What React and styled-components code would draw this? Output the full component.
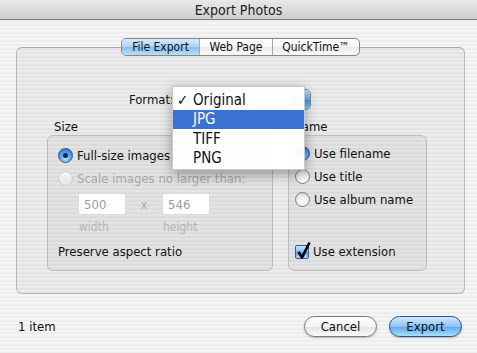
import styled, { createGlobalStyle } from 'styled-components'

const Global = createGlobalStyle`
  html, body { margin: 0; padding: 0; }
  body {
    width: 477px;
    height: 353px;
    overflow: hidden;
    font-family: "DejaVu Sans Condensed", "DejaVu Sans", sans-serif;
    font-size: 13px;
    color: #111;
  }
`

const Window = styled.div`
  width: 477px;
  height: 353px;
  display: flex;
  flex-direction: column;
  background: repeating-linear-gradient(to bottom, #ededed 0, #ededed 2px, #f5f5f5 2px, #f5f5f5 4px);
`

const TitleBar = styled.div`
  height: 19px;
  border-bottom: 1px solid #7e7e7e;
  background: linear-gradient(#e9e9e9, #cfcfcf);
  display: flex;
  align-items: center;
  justify-content: center;
  font-size: 14px;
  color: #222;
`

const Body = styled.div`
  flex: 1;
  display: flex;
  flex-direction: column;
  padding: 18px 12px 0 16px;
`

const Tabs = styled.div`
  display: flex;
  justify-content: center;
  height: 18px;
  margin-bottom: -9px;
  position: relative;
  z-index: 1;
`

const Segments = styled.div`
  display: flex;
  border: 1px solid #868686;
  border-radius: 5px;
  overflow: hidden;
  background: linear-gradient(#ffffff 0%, #f6f6f6 50%, #ebebeb 51%, #fafafa 100%);
`

const Tab = styled.div`
  width: ${p => p.$w}px;
  display: flex;
  align-items: center;
  justify-content: center;
  font-size: 12px;
  color: #111;
  border-left: ${p => (p.$first ? 'none' : '1px solid #a8a8a8')};
  background: ${p =>
    p.$active
      ? 'linear-gradient(#d6eafd 0%, #acd2f8 50%, #83bdf5 51%, #b7e1fe 100%)'
      : 'transparent'};
  box-sizing: border-box;
`

const Panel = styled.div`
  height: 247px;
  box-sizing: border-box;
  border: 1px solid #b7b7b7;
  border-top-color: #a9a9a9;
  border-radius: 6px;
  background: rgba(0, 0, 0, 0.035);
  display: flex;
  flex-direction: column;
`

const FormatRow = styled.div`
  margin-top: 41px;
  height: 21px;
  display: flex;
  align-items: center;
`

const FormatLabel = styled.div`
  width: 163px;
  text-align: right;
  padding-right: 6px;
  box-sizing: border-box;
`

const PopupWrap = styled.div`
  position: relative;
  width: 131px;
  height: 21px;
`

const Popup = styled.div`
  height: 21px;
  border: 1px solid #8a8a8a;
  border-radius: 5px;
  box-sizing: border-box;
  background: linear-gradient(#ffffff, #ececec);
  display: flex;
  justify-content: flex-end;
  overflow: hidden;
`

const PopupArrow = styled.div`
  width: 18px;
  background: linear-gradient(#bfe0fd 0%, #6aaef2 50%, #3f8fe8 51%, #8fd0fd 100%);
  border-left: 1px solid #4a6fa8;
`

const Menu = styled.div`
  position: absolute;
  left: -8px;
  top: -3px;
  width: 133px;
  padding: 3px 0 1px;
  background: rgba(255, 255, 255, 0.97);
  border: 1px solid #c9c9c9;
  box-shadow: 0 4px 12px rgba(0, 0, 0, 0.35);
  font-size: 15px;
  z-index: 5;
  box-sizing: border-box;
`

const MenuItem = styled.div`
  height: 19.5px;
  display: flex;
  align-items: center;
  padding-left: 20px;
  position: relative;
  background: ${p => (p.$hi ? '#3a72d4' : 'transparent')};
  color: ${p => (p.$hi ? '#fff' : '#111')};
`

const Check = styled.span`
  position: absolute;
  left: 4px;
  font-size: 15px;
  font-weight: bold;
`

const Columns = styled.div`
  display: flex;
  gap: 15px;
  padding-left: 30px;
  margin-top: 9px;
`

const Column = styled.div`
  width: ${p => p.$w}px;
  display: flex;
  flex-direction: column;
`

const GroupLabel = styled.div`
  height: 16px;
  line-height: 16px;
  padding-left: ${p => p.$pad}px;
`

const Group = styled.div`
  height: 136px;
  box-sizing: border-box;
  border: 1px solid #bcbcbc;
  border-radius: 6px;
  background: rgba(0, 0, 0, 0.035);
  display: flex;
  flex-direction: column;
  padding: ${p => p.$pad};
`

const Option = styled.div`
  display: flex;
  align-items: center;
  gap: 4px;
  height: ${p => p.$h || 23}px;
  color: ${p => (p.$disabled ? '#a8a8a8' : '#111')};
`

const Radio = styled.span`
  width: 15px;
  height: 15px;
  border-radius: 50%;
  box-sizing: border-box;
  flex: none;
  position: relative;
  border: 1px solid ${p => (p.$on ? '#2f5590' : p.$disabled ? '#c8c8c8' : '#7e7e7e')};
  background: ${p =>
    p.$on
      ? 'radial-gradient(circle at 50% 75%, #b9e4ff 0%, #5aa7f0 45%, #1f63c2 100%)'
      : p.$disabled
      ? 'linear-gradient(#f4f4f4, #e6e6e6)'
      : 'radial-gradient(circle at 50% 80%, #ffffff 0%, #f2f2f2 50%, #c9c9c9 100%)'};
  &::after {
    content: '';
    display: ${p => (p.$on ? 'block' : 'none')};
    position: absolute;
    left: 4px;
    top: 4px;
    width: 5px;
    height: 5px;
    border-radius: 50%;
    background: #0d2750;
  }
`

const SizeInputs = styled.div`
  display: flex;
  align-items: center;
  padding-left: 20px;
  margin-top: 3px;
  height: 22px;
`

const Field = styled.div`
  width: 48px;
  height: 22px;
  box-sizing: border-box;
  background: #fff;
  border: 1px solid #dcdcdc;
  color: #9c9c9c;
  display: flex;
  align-items: center;
  padding-left: 5px;
`

const Times = styled.div`
  width: 36px;
  text-align: center;
  color: #b0b0b0;
`

const Captions = styled.div`
  display: flex;
  padding-left: 21px;
  height: 24px;
  align-items: center;
  font-size: 12px;
  color: #b4b4b4;
`

const Caption = styled.div`
  width: ${p => p.$w}px;
`

const Plain = styled.div`
  height: 24px;
  display: flex;
  align-items: center;
`

const Spacer = styled.div`
  height: ${p => p.$h}px;
`

const Box = styled.span`
  width: 14px;
  height: 14px;
  flex: none;
  box-sizing: border-box;
  border: 1px solid #3a5d95;
  border-radius: 2px;
  background: linear-gradient(#c7e6ff 0%, #7dbcf3 50%, #4f9ae9 51%, #a6dcff 100%);
  position: relative;
  svg {
    position: absolute;
    left: 0px;
    top: -5px;
  }
`

const Footer = styled.div`
  display: flex;
  align-items: center;
  padding: 22px 3px 0 2px;
  height: 21px;
`

const Count = styled.div`
  flex: 1;
`

const Button = styled.div`
  width: 73px;
  height: 21px;
  box-sizing: border-box;
  border-radius: 11px;
  margin-left: ${p => p.$ml || 0}px;
  display: flex;
  align-items: center;
  justify-content: center;
  border: 1px solid ${p => (p.$primary ? '#2c4f93' : '#7b7b7b')};
  background: ${p =>
    p.$primary
      ? 'linear-gradient(#cfe8fe 0%, #8cc4f7 50%, #5aa6f0 51%, #a8e0ff 100%)'
      : 'linear-gradient(#ffffff 0%, #f3f3f3 50%, #e2e2e2 51%, #fafafa 100%)'};
  box-shadow: 0 1px 2px rgba(0, 0, 0, 0.25);
`

export default function App() {
  return (
    <>
      <Global />
      <Window>
        <TitleBar>Export Photos</TitleBar>
        <Body>
          <Tabs>
            <Segments>
              <Tab $w={77} $first $active>File Export</Tab>
              <Tab $w={73}>Web Page</Tab>
              <Tab $w={87}>QuickTime™</Tab>
            </Segments>
          </Tabs>
          <Panel>
            <FormatRow>
              <FormatLabel>Format:</FormatLabel>
              <PopupWrap>
                <Popup>
                  <PopupArrow />
                </Popup>
                <Menu>
                  <MenuItem><Check>✓</Check>Original</MenuItem>
                  <MenuItem $hi>JPG</MenuItem>
                  <MenuItem>TIFF</MenuItem>
                  <MenuItem>PNG</MenuItem>
                </Menu>
              </PopupWrap>
            </FormatRow>
            <Columns>
              <Column $w={226}>
                <GroupLabel $pad={7}>Size</GroupLabel>
                <Group $pad="8px 0 0 10px">
                  <Option>
                    <Radio $on />
                    Full-size images
                  </Option>
                  <Option $disabled>
                    <Radio $disabled />
                    Scale images no larger than:
                  </Option>
                  <SizeInputs>
                    <Field>500</Field>
                    <Times>x</Times>
                    <Field>546</Field>
                  </SizeInputs>
                  <Captions>
                    <Caption $w={84}>width</Caption>
                    <Caption $w={60}>height</Caption>
                  </Captions>
                  <Plain>Preserve aspect ratio</Plain>
                </Group>
              </Column>
              <Column $w={139}>
                <GroupLabel $pad={5}>Name</GroupLabel>
                <Group $pad="6px 0 0 6px">
                  <Option>
                    <Radio $on />
                    Use filename
                  </Option>
                  <Option>
                    <Radio />
                    Use title
                  </Option>
                  <Option>
                    <Radio />
                    Use album name
                  </Option>
                  <Spacer $h={29} />
                  <Option>
                    <Box>
                      <svg width="16" height="19" viewBox="0 0 16 19">
                        <path d="M2.5 11 L6 16.5 L13.5 1.5" fill="none" stroke="#000" strokeWidth="2.6" strokeLinejoin="round" />
                      </svg>
                    </Box>
                    Use extension
                  </Option>
                </Group>
              </Column>
            </Columns>
          </Panel>
          <Footer>
            <Count>1 item</Count>
            <Button>Cancel</Button>
            <Button $primary $ml={12}>Export</Button>
          </Footer>
        </Body>
      </Window>
    </>
  )
}
